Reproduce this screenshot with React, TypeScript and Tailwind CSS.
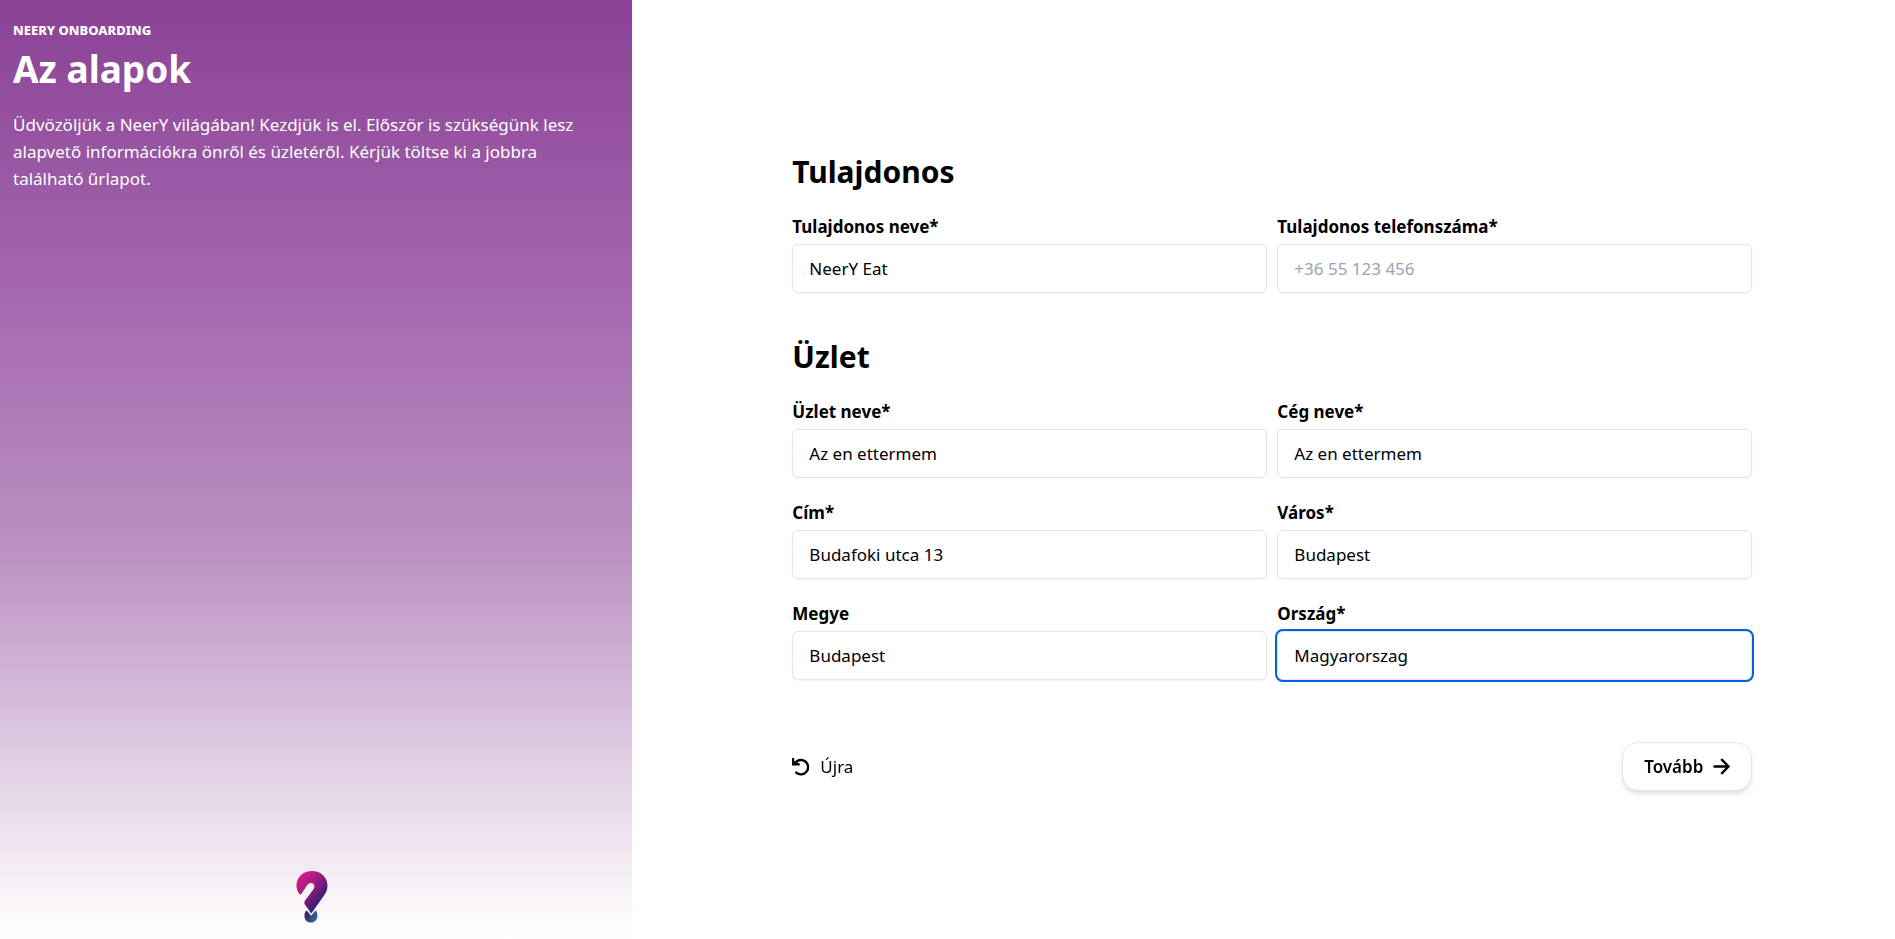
import { useId } from "react";

type FieldProps = {
  label: string;
  value?: string;
  placeholder?: string;
  focused?: boolean;
};

function Field({ label, value, placeholder, focused }: FieldProps) {
  const id = useId();
  return (
    <div className="flex flex-col gap-1">
      <label htmlFor={id} className="text-[17px] leading-[26px] font-bold">
        {label}
      </label>
      <input
        id={id}
        type="text"
        defaultValue={value}
        placeholder={placeholder}
        autoFocus={focused}
        className="h-[49px] w-full rounded-md border border-[#e5e5e5] bg-white px-4 text-[17px] shadow-xs placeholder:text-[#9ca3af] focus:outline-2 focus:outline-[#0060df]"
      />
    </div>
  );
}

function Logo() {
  return (
    <svg viewBox="0 0 32 53" className="h-[53px] w-8" role="img" aria-label="NeerY">
      <defs>
        <linearGradient id="hook" x1="3" y1="8" x2="27" y2="30" gradientUnits="userSpaceOnUse">
          <stop offset="0" stopColor="#d81b84" />
          <stop offset="0.5" stopColor="#951b81" />
          <stop offset="1" stopColor="#312070" />
        </linearGradient>
        <linearGradient id="dot" x1="9" y1="44" x2="21" y2="50" gradientUnits="userSpaceOnUse">
          <stop offset="0" stopColor="#2a2262" />
          <stop offset="1" stopColor="#3a6ca0" />
        </linearGradient>
      </defs>
      <path
        d="M3.2 23.8 C1.3 21 0.5 18.5 0.5 15.5 C0.5 7 7.5 1 16 1 C24.5 1 31.5 7 31.5 15.5 C31.5 19.5 30.2 22.5 28 25.5 L15.3 43.5 L9.2 35 C8 33.2 8 32 9.2 30.2 L17.3 19.4 C19.6 16.2 18 13 15.2 13 C13 13 12 14 11 15.5 L5.6 23.6 Q4.4 25.2 3.2 23.8 Z"
        fill="url(#hook)"
      />
      <path
        d="M10 40.8 Q10.8 40.4 11.4 41.2 L15.2 45.8 L18.8 41.2 Q19.4 40.4 20.2 41 C21.2 42.6 21.6 44.4 21.4 46.4 C21 50 18.4 52.5 15 52.5 C11.400 52.5 8.600 50 8.500 46.400 C8.400 44.200 8.900 42.300 10 40.800 Z"
        fill="url(#dot)"
      />
    </svg>
  );
}

export default function App() {
  return (
    <div className="flex min-h-screen bg-white font-['Noto_Sans',sans-serif] text-[17px] text-black">
      <aside className="flex w-1/3 shrink-0 flex-col bg-[linear-gradient(to_bottom,#8a4295_0%,#a569af_32%,#bb91c2_59%,#f1e8f2_91%,#ffffff_100%)] pt-[17px] pr-5 pb-4 pl-[13px] text-white">
        <p className="text-[13px] leading-[26px] font-extrabold uppercase">NeerY Onboarding</p>
        <h1 className="text-[37px] leading-[52px] font-bold">Az alapok</h1>
        <p className="mt-4 pr-2 leading-[27px]">
          Üdvözöljük a NeerY világában! Kezdjük is el. Először is szükségünk lesz alapvető
          információkra önről és üzletéről. Kérjük töltse ki a jobbra található űrlapot.
        </p>
        <div className="mt-auto flex justify-center">
          <Logo />
        </div>
      </aside>
      <main className="ml-[18px] flex flex-1 items-center justify-center pt-1">
        <form className="w-full max-w-[960px]" onSubmit={(e) => e.preventDefault()}>
          <h2 className="text-[30px] leading-10 font-bold">Tulajdonos</h2>
          <div className="mt-[22px] grid grid-cols-2 gap-x-[10px] gap-y-[22px]">
            <Field label="Tulajdonos neve*" value="NeerY Eat" />
            <Field label="Tulajdonos telefonszáma*" placeholder="+36 55 123 456" />
          </div>
          <h2 className="mt-11 text-[30px] leading-10 font-bold">Üzlet</h2>
          <div className="mt-[22px] grid grid-cols-2 gap-x-[10px] gap-y-[22px]">
            <Field label="Üzlet neve*" value="Az en ettermem" />
            <Field label="Cég neve*" value="Az en ettermem" />
            <Field label="Cím*" value="Budafoki utca 13" />
            <Field label="Város*" value="Budapest" />
            <Field label="Megye" value="Budapest" />
            <Field label="Ország*" value="Magyarorszag" focused />
          </div>
          <div className="mt-[62px] flex items-center justify-between">
            <button type="reset" className="flex items-center gap-[10px]">
              <svg viewBox="0 0 18 18" className="size-[18px]" fill="none" stroke="currentColor" strokeWidth="2.4" aria-hidden="true">
                <path d="M3.2 4.8 A7.2 7.2 0 1 1 4.2 14.6" strokeLinecap="round" />
                <path d="M0 0 H2.2 V3.2 L7.8 5.4 V7.6 H0 Z" fill="currentColor" stroke="none" />
              </svg>
              Újra
            </button>
            <button
              type="submit"
              className="flex h-[49px] items-center gap-[10px] rounded-2xl border border-[#e5e5e5] bg-white px-[21px] font-semibold shadow-md"
            >
              Tovább
              <svg viewBox="0 0 18 18" className="size-[17px]" fill="none" stroke="currentColor" strokeWidth="2.6" strokeLinecap="round" strokeLinejoin="round" aria-hidden="true">
                <path d="M1.5 9 H16 M9.5 2 L16.5 9 L9.5 16" />
              </svg>
            </button>
          </div>
        </form>
      </main>
    </div>
  );
}
